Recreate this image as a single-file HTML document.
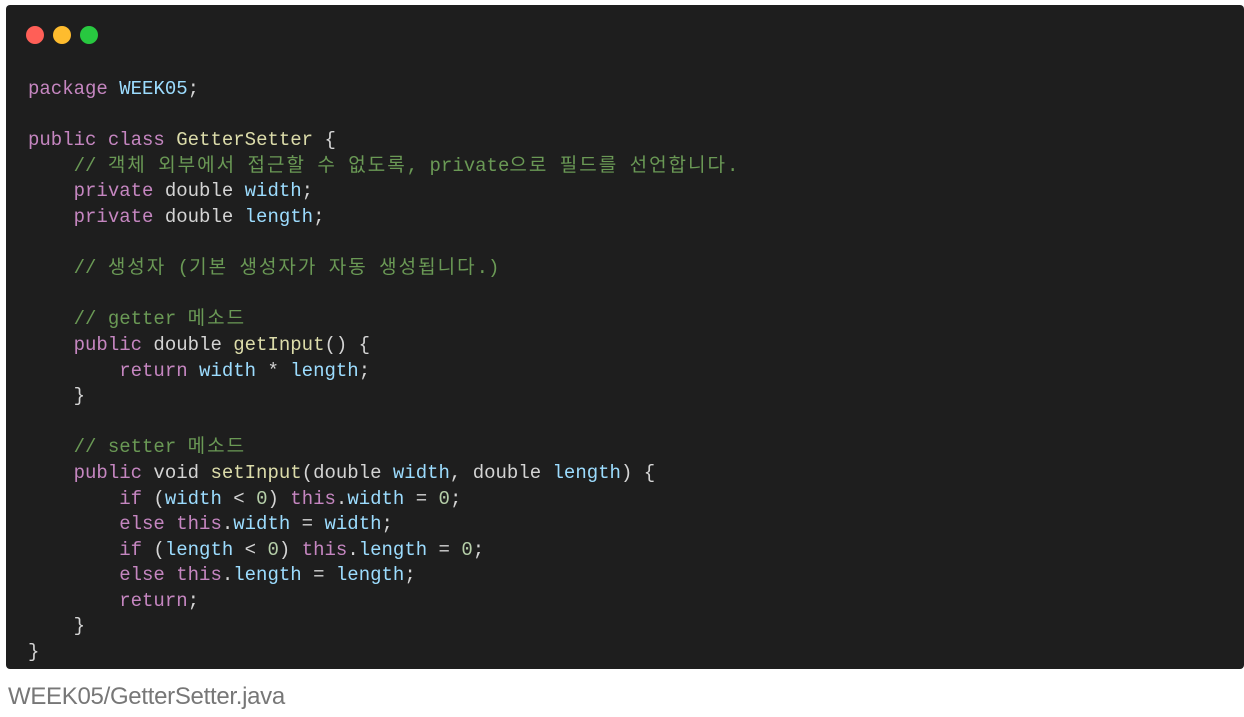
<!DOCTYPE html>
<html><head><meta charset="utf-8"><style>
html,body{margin:0;padding:0;background:#fff;width:1244px;height:717px;overflow:hidden}
.box{position:absolute;left:6px;top:5px;width:1238px;height:664px;background:#1e1e1e;border-radius:4px}
.dot{position:absolute;top:21px;width:18px;height:18px;border-radius:50%}
pre{position:absolute;left:22px;top:72px;margin:0;font-family:"Liberation Mono","Noto Sans CJK KR",monospace;font-size:19px;line-height:25.6px;color:#d4d4d4}
.k{color:#c586c0}.v{color:#9cdcfe}.c{color:#6a9955}.t{color:#dcdcaa}.n{color:#b5cea8}
.h{letter-spacing:2px}
.cap{position:absolute;left:8px;top:683px;font-family:"Liberation Sans",sans-serif;font-size:24px;color:#777;letter-spacing:-0.3px}
</style></head><body>
<div class="box">
<div class="dot" style="left:20px;background:#ff5f57"></div>
<div class="dot" style="left:47px;background:#febc2e"></div>
<div class="dot" style="left:74px;background:#28c840"></div>
<pre><span class="k">package</span> <span class="v">WEEK05</span>;

<span class="k">public</span> <span class="k">class</span> <span class="t">GetterSetter</span> {
    <span class="c">// <span class="h">객체</span> <span class="h">외부에서</span> <span class="h">접근할</span> <span class="h">수</span> <span class="h">없도록</span>, private<span class="h">으로</span> <span class="h">필드를</span> <span class="h">선언합니다</span>.</span>
    <span class="k">private</span> double <span class="v">width</span>;
    <span class="k">private</span> double <span class="v">length</span>;

    <span class="c">// <span class="h">생성자</span> (<span class="h">기본</span> <span class="h">생성자가</span> <span class="h">자동</span> <span class="h">생성됩니다</span>.)</span>

    <span class="c">// getter <span class="h">메소드</span></span>
    <span class="k">public</span> double <span class="t">getInput</span>() {
        <span class="k">return</span> <span class="v">width</span> * <span class="v">length</span>;
    }

    <span class="c">// setter <span class="h">메소드</span></span>
    <span class="k">public</span> void <span class="t">setInput</span>(double <span class="v">width</span>, double <span class="v">length</span>) {
        <span class="k">if</span> (<span class="v">width</span> &lt; <span class="n">0</span>) <span class="k">this</span>.<span class="v">width</span> = <span class="n">0</span>;
        <span class="k">else</span> <span class="k">this</span>.<span class="v">width</span> = <span class="v">width</span>;
        <span class="k">if</span> (<span class="v">length</span> &lt; <span class="n">0</span>) <span class="k">this</span>.<span class="v">length</span> = <span class="n">0</span>;
        <span class="k">else</span> <span class="k">this</span>.<span class="v">length</span> = <span class="v">length</span>;
        <span class="k">return</span>;
    }
}</pre>
</div>
<div class="cap">WEEK05/GetterSetter.java</div>
</body></html>
